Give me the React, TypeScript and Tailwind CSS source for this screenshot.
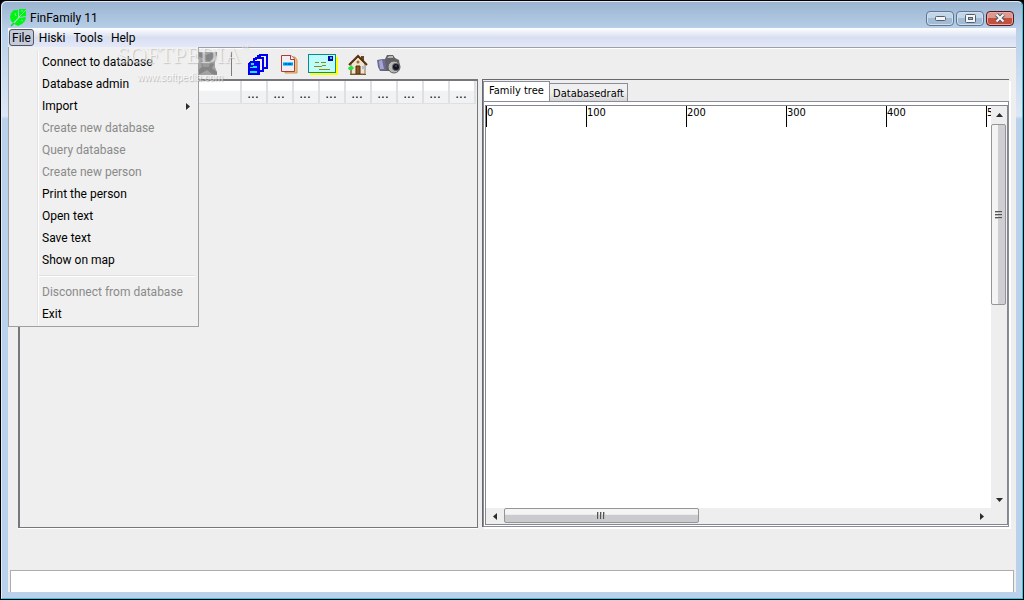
import React, { useState, FC, ReactNode } from 'react';

interface MenuEntry {
    label: string;
    disabled?: boolean;
    submenu?: boolean;
    separatorBefore?: boolean;
}

const MENUS = ['File', 'Hiski', 'Tools', 'Help'];

const FILE_MENU: MenuEntry[] = [
    { label: 'Connect to database' },
    { label: 'Database admin' },
    { label: 'Import', submenu: true },
    { label: 'Create new database', disabled: true },
    { label: 'Query database', disabled: true },
    { label: 'Create new person', disabled: true },
    { label: 'Print the person' },
    { label: 'Open text' },
    { label: 'Save text' },
    { label: 'Show on map' },
    { label: 'Disconnect from database', disabled: true, separatorBefore: true },
    { label: 'Exit' },
];

const TABS = ['Family tree', 'Databasedraft'];
const RULER = [0, 100, 200, 300, 400, 500];

const LeafLogo = () => (
    <svg width="18" height="18" viewBox="0 0 18 18" aria-hidden="true">
        <path d="M0 8 L1 4 L4 1 L8 1 L8 9 L3 14 L1 12Z" fill="#00f514" />
        <path d="M9 0 H16 V7 L9 8Z" fill="#00f514" />
        <path d="M9 9 L16 8 L15 12 L12 15 L8 17 L4 15Z" fill="#00f514" />
        <path d="M4 14 L9 8 L16 1" stroke="#a8eebb" strokeWidth="0.7" fill="none" />
        <path d="M5 4 L6 7 M11 11 L13 12 M12 1 L12 3" stroke="#a8eebb" strokeWidth="0.7" fill="none" />
        <path d="M1 17 L4 14" stroke="#00d918" strokeWidth="1.5" fill="none" />
    </svg>
);

const DisabledIcon = () => (
    <svg width="20" height="24" viewBox="0 0 20 24" aria-hidden="true">
        <path d="M0 0 H19 V3 L17 8 V15 L19 20 V23 H0Z" fill="#a3a3a3" />
        <path d="M0 0 L4 1 L8 3 L13 1 L19 0 V3 L15 7 L12 8 L16 12 L14 16 L19 20 V23 L14 22 L9 18 L4 21 L0 23 V18 L4 15 L3 10 L6 7 L0 4Z" fill="#858585" />
        <path d="M4 10 L8 8 L12 10 L11 15 L5 15Z" fill="#9b9b9b" />
    </svg>
);

const CopiesIcon = () => (
    <svg width="21" height="21" viewBox="0 0 21 21" shapeRendering="crispEdges" aria-hidden="true">
        <path d="M10 4 V2 H12 V1 H19 V14 H16" fill="#f0f0f0" stroke="#0000f0" strokeWidth="2" />
        <path d="M6 7 V5 H8 V4 H15 V17 H12" fill="#f0f0f0" stroke="#0000f0" strokeWidth="2" />
        <path d="M0 9 L3 7 H12 V21 H0Z" fill="#0000ee" />
        <path d="M3 9 H6 V11 H3Z M2 13 H5 V14 H2Z M5 12 H9 V14 H5Z M2 17 H9 V19 H2Z" fill="#14eaff" />
    </svg>
);

const DocumentIcon = () => (
    <svg width="18" height="20" viewBox="0 0 18 20" aria-hidden="true">
        <path d="M4 3 H14 L16 6 V19 H4Z" fill="#e7c18a" stroke="#cc9656" />
        <path d="M0.5 1.5 H10 L13.5 5 V17.5 H0.5Z" fill="#f4ecee" stroke="#a63d38" />
        <path d="M9.5 1.5 V5.5 H13.5" fill="#fff" stroke="#a63d38" />
        <path d="M2 8 H12 V12 H2Z" fill="#1689f5" />
        <path d="M2 8.5 H12 M2 11.5 H12" stroke="#29ddff" />
        <path d="M4 10 H6 M7 10 H10" stroke="#06308c" />
    </svg>
);

const CardIcon = () => (
    <svg width="30" height="21" viewBox="0 0 30 21" shapeRendering="crispEdges" aria-hidden="true">
        <path d="M2 3 H30 V21 H2Z" fill="#ffff00" />
        <path d="M0 0 H28 V19 H0Z" fill="#078b8b" />
        <path d="M1 1 H27 V18 H1Z" fill="#bdfcfb" />
        <path d="M20 2 H25 V7 H20Z" fill="#0000a8" />
        <path d="M22 3 H24 V5 H22Z" fill="#16cfff" />
        <path d="M7 8.5 H11 M13 8.5 H18 M6 12.5 H14 M14 11.5 H18 M11 15.5 H22" stroke="#8a8a14" fill="none" />
    </svg>
);

const HouseIcon = () => (
    <svg width="20" height="23" viewBox="0 0 20 23" aria-hidden="true">
        <path d="M13 3 H16 V9 L13 7Z" fill="#6e4523" />
        <path d="M12 2 L14 0 L16 2" stroke="#e6dbfa" fill="none" />
        <path d="M3 11 L10 4 L17 11 V21 H3Z" fill="#efe5cf" stroke="#8e7449" />
        <path d="M1 12 L10 3 L19 12" fill="none" stroke="#563517" strokeWidth="2" />
        <path d="M8 13 H12 V21 H8Z" fill="#8b5524" stroke="#51300f" />
        <circle cx="10" cy="9" r="1.5" fill="#a5652c" />
        <path d="M14 13 H17 V16 H14Z" fill="#b9b5e0" />
        <path d="M1 14 L4 13 L6 15 L4 17 L1 17 L0 15Z" fill="#20e83a" />
        <path d="M3 17 V21 M2 21.5 H18" stroke="#7a5530" />
    </svg>
);

const CameraIcon = () => (
    <svg width="24" height="20" viewBox="0 0 24 20" aria-hidden="true">
        <path d="M1 6 L8 5 L10 1 L16 1 L18 4 L22 6 L23 13 L20 17 L10 17 L4 17 L1 12Z" fill="#626266" />
        <path d="M0 6 L8 5 L9 16 L3 17 L1 13Z" fill="#6d6b96" />
        <path d="M2 7 L5 6 L7 15 L3 15Z" fill="#a7a5d1" />
        <path d="M10 4 L12 2 L16 2 L16 4Z" fill="#b9b9bd" />
        <circle cx="17" cy="13" r="6" fill="#b9b9b7" stroke="#5d5d5d" />
        <circle cx="19" cy="13" r="4" fill="#656565" />
        <circle cx="19" cy="13" r="3" fill="#151520" />
        <circle cx="19" cy="12" r="1" fill="#3e4b87" />
    </svg>
);

const Arrow: FC<{ points: string }> = ({ points }) => (
    <svg width="7" height="7" viewBox="0 0 7 7" aria-hidden="true">
        <polygon points={points} fill="#2b2b2b" />
    </svg>
);

const CaptionButton: FC<{ label: string; danger?: boolean; children: ReactNode }> = ({ label, danger, children }) => (
    <button
        aria-label={label}
        className={`flex h-[15px] w-7 items-center justify-center rounded-sm border ${
            danger
                ? 'border-[#5b1420] bg-linear-to-b from-[#dc9a8f] from-45% to-[#c2503c] to-50% shadow-[inset_0_0_0_1px_#e5aba2]'
                : 'border-[#61758f] bg-linear-to-b from-[#c3d5e9] from-45% to-[#a2bbd5] to-50% shadow-[inset_0_0_0_1px_#cfdff0]'
        }`}
    >
        {children}
    </button>
);

const TitleBar = () => (
    <header className="flex h-[26px] shrink-0 items-center pl-2 pr-2 pt-1.5">
        <LeafLogo />
        <h1 className="ml-0.5 text-[12px]">FinFamily 11</h1>
        <div className="ml-auto flex gap-0.5">
            <CaptionButton label="Minimize">
                <svg width="11" height="5" viewBox="0 0 11 5">
                    <rect x="0.5" y="0.5" width="10" height="4" rx="1" fill="#f5f5f5" stroke="#535d6c" />
                </svg>
            </CaptionButton>
            <CaptionButton label="Maximize">
                <svg width="11" height="9" viewBox="0 0 11 9">
                    <rect x="0.5" y="0.5" width="10" height="8" rx="1" fill="#f5f5f5" stroke="#535d6c" />
                    <rect x="3.5" y="3.5" width="4" height="2" fill="#9ab4d2" stroke="#535d6c" />
                </svg>
            </CaptionButton>
            <CaptionButton label="Close" danger>
                <svg width="12" height="10" viewBox="0 0 12 10">
                    <path d="M2.5 1.5 L9.5 8.5 M9.5 1.5 L2.5 8.5" stroke="#565c6a" strokeWidth="4" />
                    <path d="M2.5 1.5 L9.5 8.5 M9.5 1.5 L2.5 8.5" stroke="#f7f7f7" strokeWidth="2" />
                </svg>
            </CaptionButton>
        </div>
    </header>
);

const FileMenu = () => (
    <div role="menu" className="absolute left-0 top-full z-10 w-[191px] border border-t-0 border-[#a0a0a0] bg-[#f0f0f0] pb-px pt-1">
        <div className="relative">
            <div className="absolute inset-y-0 left-7 w-0.5 border-l border-[#e2e2e2] bg-white" />
            {FILE_MENU.map(item => (
                <div key={item.label}>
                    {item.separatorBefore && (
                        <div className="ml-[30px] mr-[3px] flex h-2.5 items-center">
                            <div className="h-0.5 w-full border-t border-[#e0e0e0] bg-white" />
                        </div>
                    )}
                    <button
                        role="menuitem"
                        disabled={item.disabled}
                        className="flex h-[22px] w-full items-center justify-between pl-[33px] pr-1.5 text-left disabled:text-[#8a8a8a]"
                    >
                        {item.label}
                        {item.submenu && <Arrow points="1,0 5,3.5 1,7" />}
                    </button>
                </div>
            ))}
        </div>
    </div>
);

const Watermark = () => (
    <div className="pointer-events-none absolute left-[109px] top-3.5 z-20 opacity-60" aria-hidden="true">
        <div className="flex font-['Liberation_Serif',serif] text-[23px] leading-7 text-[#f4f4f4] [text-shadow:1px_1px_1px_#aaa]">
            SOFTPEDIA<span className="text-[8px] leading-3">™</span>
        </div>
        <div className="pl-5 font-['Liberation_Sans',sans-serif] text-[10px] leading-4 text-white [text-shadow:1px_1px_1px_#888]">
            www.softpedia.com
        </div>
    </div>
);

const MenuBar = () => {
    const [openMenu, setOpenMenu] = useState('File');

    return (
        <nav className="relative flex h-5 shrink-0 items-center border-b border-[#a0a0a0] bg-linear-to-b from-white via-[#d8dff0] via-50% to-[#e4e9fa] pl-px">
            {MENUS.map(menu => (
                <button
                    key={menu}
                    onClick={() => setOpenMenu(openMenu === menu ? '' : menu)}
                    className={`mr-0.5 flex h-[17px] items-center rounded-[3px] border px-0.5 ${
                        openMenu === menu ? 'border-[#50555f] bg-[#c5cad9]' : 'border-transparent'
                    }`}
                >
                    {menu}
                </button>
            ))}
            {openMenu === 'File' && <FileMenu />}
            <Watermark />
        </nav>
    );
};

const Toolbar = () => (
    <div className="flex h-[31px] shrink-0 items-center border-t border-white pl-[190px]">
        <button aria-label="Stop" disabled><DisabledIcon /></button>
        <div className="ml-[13px] mr-4 h-6 w-px bg-[#7b7b7b]" />
        <div className="flex items-center">
            <button aria-label="Copy" className="mr-3"><CopiesIcon /></button>
            <button aria-label="Document" className="mr-[9px]"><DocumentIcon /></button>
            <button aria-label="Postcard" className="mr-2.5"><CardIcon /></button>
            <button aria-label="Home" className="mr-[9px]"><HouseIcon /></button>
            <button aria-label="Camera"><CameraIcon /></button>
        </div>
    </div>
);

const PersonTable = () => (
    <section className="w-[460px] shrink-0 border-b border-l-2 border-r border-t-2 border-[#77777b] bg-[#efefef] pr-px shadow-[0_1px_0_#fff]">
        <table className="w-full table-fixed border-separate border-spacing-0 font-['DejaVu_Sans',sans-serif]">
            <thead>
                <tr className="h-[23px] bg-linear-to-b from-white from-40% to-[#f1f2f4] to-45%">
                    <th className="border-b border-r-2 border-[#e0e0e2]" aria-label="Name" />
                    {[1, 2, 3, 4, 5, 6, 7, 8, 9].map(col => (
                        <th key={col} className="w-[26px] border-b border-r-2 border-[#e0e0e2] p-0 pr-0.5 pt-1 text-center font-normal leading-3">
                            ...
                        </th>
                    ))}
                </tr>
            </thead>
        </table>
    </section>
);

const VerticalScrollbar = () => (
    <div className="flex w-4 shrink-0 flex-col bg-[#eeeeee]">
        <button aria-label="Scroll up" className="flex h-[18px] items-center justify-center"><Arrow points="0,5 3.5,1 7,5" /></button>
        <div className="flex-1">
            <div className="flex h-[49.5%] w-[15px] flex-col items-center justify-center gap-px rounded-xs border border-[#959595] bg-linear-to-r from-[#f4f4f4] from-45% to-[#cfcfd3] to-50%">
                {[1, 2, 3].map(line => (
                    <div key={line} className="h-0.5 w-[7px] border-t border-[#555] bg-[#bbb]" />
                ))}
            </div>
        </div>
        <button aria-label="Scroll down" className="flex h-[18px] items-center justify-center"><Arrow points="0,2 7,2 3.5,6" /></button>
    </div>
);

const HorizontalScrollbar = () => (
    <div className="flex h-4 shrink-0 bg-[#eeeeee] pr-4">
        <button aria-label="Scroll left" className="flex w-[18px] items-center justify-center"><Arrow points="5,0 5,7 1,3.5" /></button>
        <div className="flex-1">
            <div className="flex h-[15px] w-[41.5%] items-center justify-center gap-px rounded-xs border border-[#959595] bg-linear-to-b from-[#f4f4f4] from-40% to-[#cbcbcf] to-50%">
                {[1, 2, 3].map(line => (
                    <div key={line} className="h-[7px] w-0.5 border-l border-[#555] bg-[#bbb]" />
                ))}
            </div>
        </div>
        <button aria-label="Scroll right" className="flex w-[18px] items-center justify-center"><Arrow points="1,0 5,3.5 1,7" /></button>
    </div>
);

const TreePanel = () => {
    const [activeTab, setActiveTab] = useState('Family tree');

    return (
        <section className="mb-px flex min-w-0 flex-1 flex-col border-l border-t border-[#696969] pt-px font-['DejaVu_Sans_Condensed','DejaVu_Sans',sans-serif] text-[11px] shadow-[2px_2px_0_#fff]">
            <div role="tablist" className="flex h-5 items-end">
                {TABS.map(tab => (
                    <button
                        key={tab}
                        role="tab"
                        aria-selected={activeTab === tab}
                        onClick={() => setActiveTab(tab)}
                        className={`border-[#8b8c99] ${
                            activeTab === tab
                                ? 'h-5 w-[67px] border-x border-t bg-white'
                                : 'h-[18px] w-[78px] border-r border-t bg-linear-to-b from-[#f0f0f0] from-50% to-[#d5d5d7] pt-0.5'
                        }`}
                    >
                        {tab}
                    </button>
                ))}
            </div>
            <div className="flex min-h-0 flex-1 flex-col border border-[#8b8c99] bg-white pb-px pl-px pt-[3px]">
                <div className="flex min-h-0 flex-1 flex-col border border-[#828790]">
                    <div className="flex min-h-0 flex-1">
                        <div className="flex min-w-0 flex-1 overflow-hidden bg-white">
                            {RULER.map(mark => (
                                <div key={mark} className="h-[21px] w-[100px] shrink-0 border-l border-black leading-[14px]">
                                    {mark}
                                </div>
                            ))}
                        </div>
                        <VerticalScrollbar />
                    </div>
                    <HorizontalScrollbar />
                </div>
            </div>
        </section>
    );
};

const App: FC = () => (
    <div className="h-screen bg-black font-['Roboto','Open_Sans',sans-serif] text-[12px] text-black">
        <div className="flex h-full flex-col overflow-hidden rounded-t-md border border-black bg-[linear-gradient(to_bottom,#9ab3cf,#b9d1ea_30px,#dbe8f6_115px,#b9d1ea_118px)]">
            <div className="flex min-h-0 flex-1 flex-col rounded-t-md border border-b-[#24cbe5] border-l-[#e2eefa] border-r-[#24cbe5] border-t-[#dfebf7]">
                <TitleBar />
                <div className="mx-1.5 mb-1.5 flex min-h-0 flex-1 flex-col bg-[#eeeeee]">
                    <MenuBar />
                    <Toolbar />
                    <main className="mb-[42px] ml-2.5 mr-[7px] flex min-h-0 flex-1 gap-1">
                        <PersonTable />
                        <TreePanel />
                    </main>
                    <input
                        aria-label="Status"
                        readOnly
                        className="mx-0.5 h-[22px] shrink-0 border border-b-0 border-[#abadb3] bg-white px-1 outline-none"
                    />
                </div>
            </div>
        </div>
    </div>
);

export default App;
